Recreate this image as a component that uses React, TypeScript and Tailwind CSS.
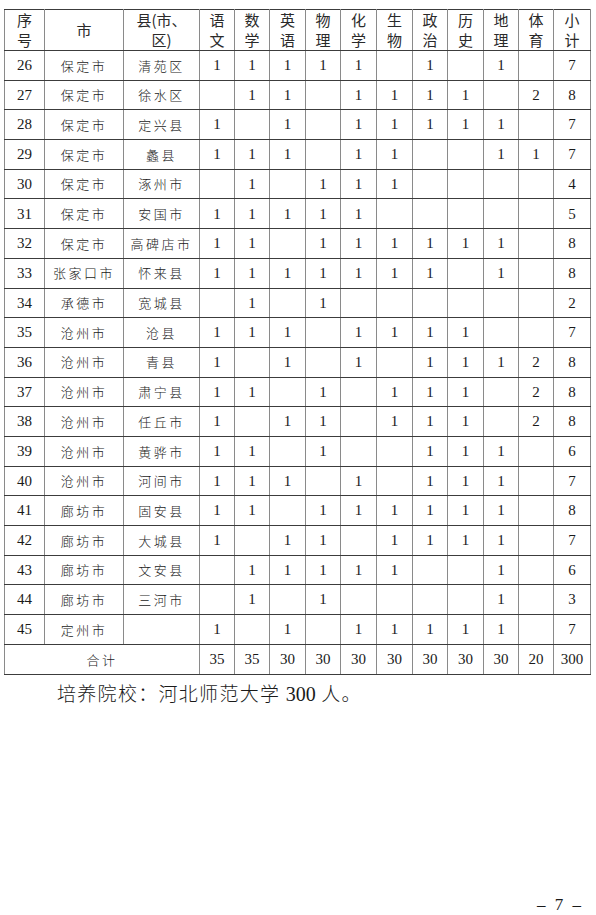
import React from 'react';

type Row = [number, string, string, (number | null)[], number];

const _ = null;

const rows: Row[] = [
  [26, '保定市', '清苑区', [1, 1, 1, 1, 1, _, 1, _, 1, _], 7],
  [27, '保定市', '徐水区', [_, 1, 1, _, 1, 1, 1, 1, _, 2], 8],
  [28, '保定市', '定兴县', [1, _, 1, _, 1, 1, 1, 1, 1, _], 7],
  [29, '保定市', '蠡县', [1, 1, 1, _, 1, 1, _, _, 1, 1], 7],
  [30, '保定市', '涿州市', [_, 1, _, 1, 1, 1, _, _, _, _], 4],
  [31, '保定市', '安国市', [1, 1, 1, 1, 1, _, _, _, _, _], 5],
  [32, '保定市', '高碑店市', [1, 1, _, 1, 1, 1, 1, 1, 1, _], 8],
  [33, '张家口市', '怀来县', [1, 1, 1, 1, 1, 1, 1, _, 1, _], 8],
  [34, '承德市', '宽城县', [_, 1, _, 1, _, _, _, _, _, _], 2],
  [35, '沧州市', '沧县', [1, 1, 1, _, 1, 1, 1, 1, _, _], 7],
  [36, '沧州市', '青县', [1, _, 1, _, 1, _, 1, 1, 1, 2], 8],
  [37, '沧州市', '肃宁县', [1, 1, _, 1, _, 1, 1, 1, _, 2], 8],
  [38, '沧州市', '任丘市', [1, _, 1, 1, _, 1, 1, 1, _, 2], 8],
  [39, '沧州市', '黄骅市', [1, 1, _, 1, _, _, 1, 1, 1, _], 6],
  [40, '沧州市', '河间市', [1, 1, 1, _, 1, _, 1, 1, 1, _], 7],
  [41, '廊坊市', '固安县', [1, 1, _, 1, 1, 1, 1, 1, 1, _], 8],
  [42, '廊坊市', '大城县', [1, _, 1, 1, _, 1, 1, 1, 1, _], 7],
  [43, '廊坊市', '文安县', [_, 1, 1, 1, 1, 1, _, _, 1, _], 6],
  [44, '廊坊市', '三河市', [_, 1, _, 1, _, _, _, _, 1, _], 3],
  [45, '定州市', '', [1, _, 1, _, 1, 1, 1, 1, 1, _], 7],
];

const subjects = [
  ['语', '文'],
  ['数', '学'],
  ['英', '语'],
  ['物', '理'],
  ['化', '学'],
  ['生', '物'],
  ['政', '治'],
  ['历', '史'],
  ['地', '理'],
  ['体', '育'],
  ['小', '计'],
];

const totals = [35, 35, 30, 30, 30, 30, 30, 30, 30, 20, 300];

const colWidths = ['w-[40px]', 'w-[79px]', 'w-[76px]', 'w-[35px]', 'w-[35px]', 'w-[36px]', 'w-[35px]', 'w-[36px]', 'w-[36px]', 'w-[35px]', 'w-[36px]', 'w-[35px]', 'w-[35px]', 'w-[37px]'];

const cjk = "font-['Noto_Sans_CJK_SC',sans-serif]";
const num = "font-['Liberation_Serif','Noto_Sans_CJK_SC',serif]";
const cell = 'border-x border-x-[#8a8a8a] border-y border-y-[#3c3c3c] p-0 text-center align-middle';
const head = `${cell} ${cjk} font-normal text-[15px] leading-[20px] text-[#2a2a2a]`;

export default function App() {
  return (
    <div className="w-[596px] h-[915px] bg-white text-[#1a1a1a] flex flex-col">
      <div className="pt-[9px] pl-[4px]">
        <table className="table-fixed border-collapse w-[586px]">
          <colgroup>
            {colWidths.map((w, i) => (
              <col key={i} className={w} />
            ))}
          </colgroup>
          <thead>
            <tr className="h-[39px]">
              <th className={head}>
                序<br />号
              </th>
              <th className={head}>市</th>
              <th className={head}>
                县(市、<br />区)
              </th>
              {subjects.map(([a, b]) => (
                <th key={a + b} className={head}>
                  {a}<br />{b}
                </th>
              ))}
            </tr>
          </thead>
          <tbody>
            {rows.map(([no, city, county, vals, sum]) => (
              <tr key={no} className="h-[29.7px]">
                <td className={`${cell} ${num} text-[15px]`}>{no}</td>
                <td className={`${cell} ${cjk} font-light text-[13px] tracking-[2.5px]`}>{city}</td>
                <td className={`${cell} ${cjk} font-light text-[13px] tracking-[2.5px]`}>{county}</td>
                {vals.map((v, i) => (
                  <td key={i} className={`${cell} ${num} text-[15px]`}>{v ?? ''}</td>
                ))}
                <td className={`${cell} ${num} text-[15px]`}>{sum}</td>
              </tr>
            ))}
            <tr className="h-[30px]">
              <td colSpan={3} className={`${cell} ${cjk} font-light text-[13px] tracking-[2.5px]`}>合计</td>
              {totals.map((t, i) => (
                <td key={i} className={`${cell} ${num} text-[15px]`}>{t}</td>
              ))}
            </tr>
          </tbody>
        </table>
      </div>

      <p className={`mt-[6px] pl-[57px] ${cjk} font-light text-[19px] leading-[24px] tracking-[1.3px]`}>
        培养院校：河北师范大学 <span className={`${num} tracking-normal text-[20px]`}>300</span> 人。
      </p>

      <div className={`mt-auto pr-[15px] text-right ${num} text-[17px] leading-[20px] [word-spacing:5px]`}>
        – 7 –
      </div>
    </div>
  );
}
